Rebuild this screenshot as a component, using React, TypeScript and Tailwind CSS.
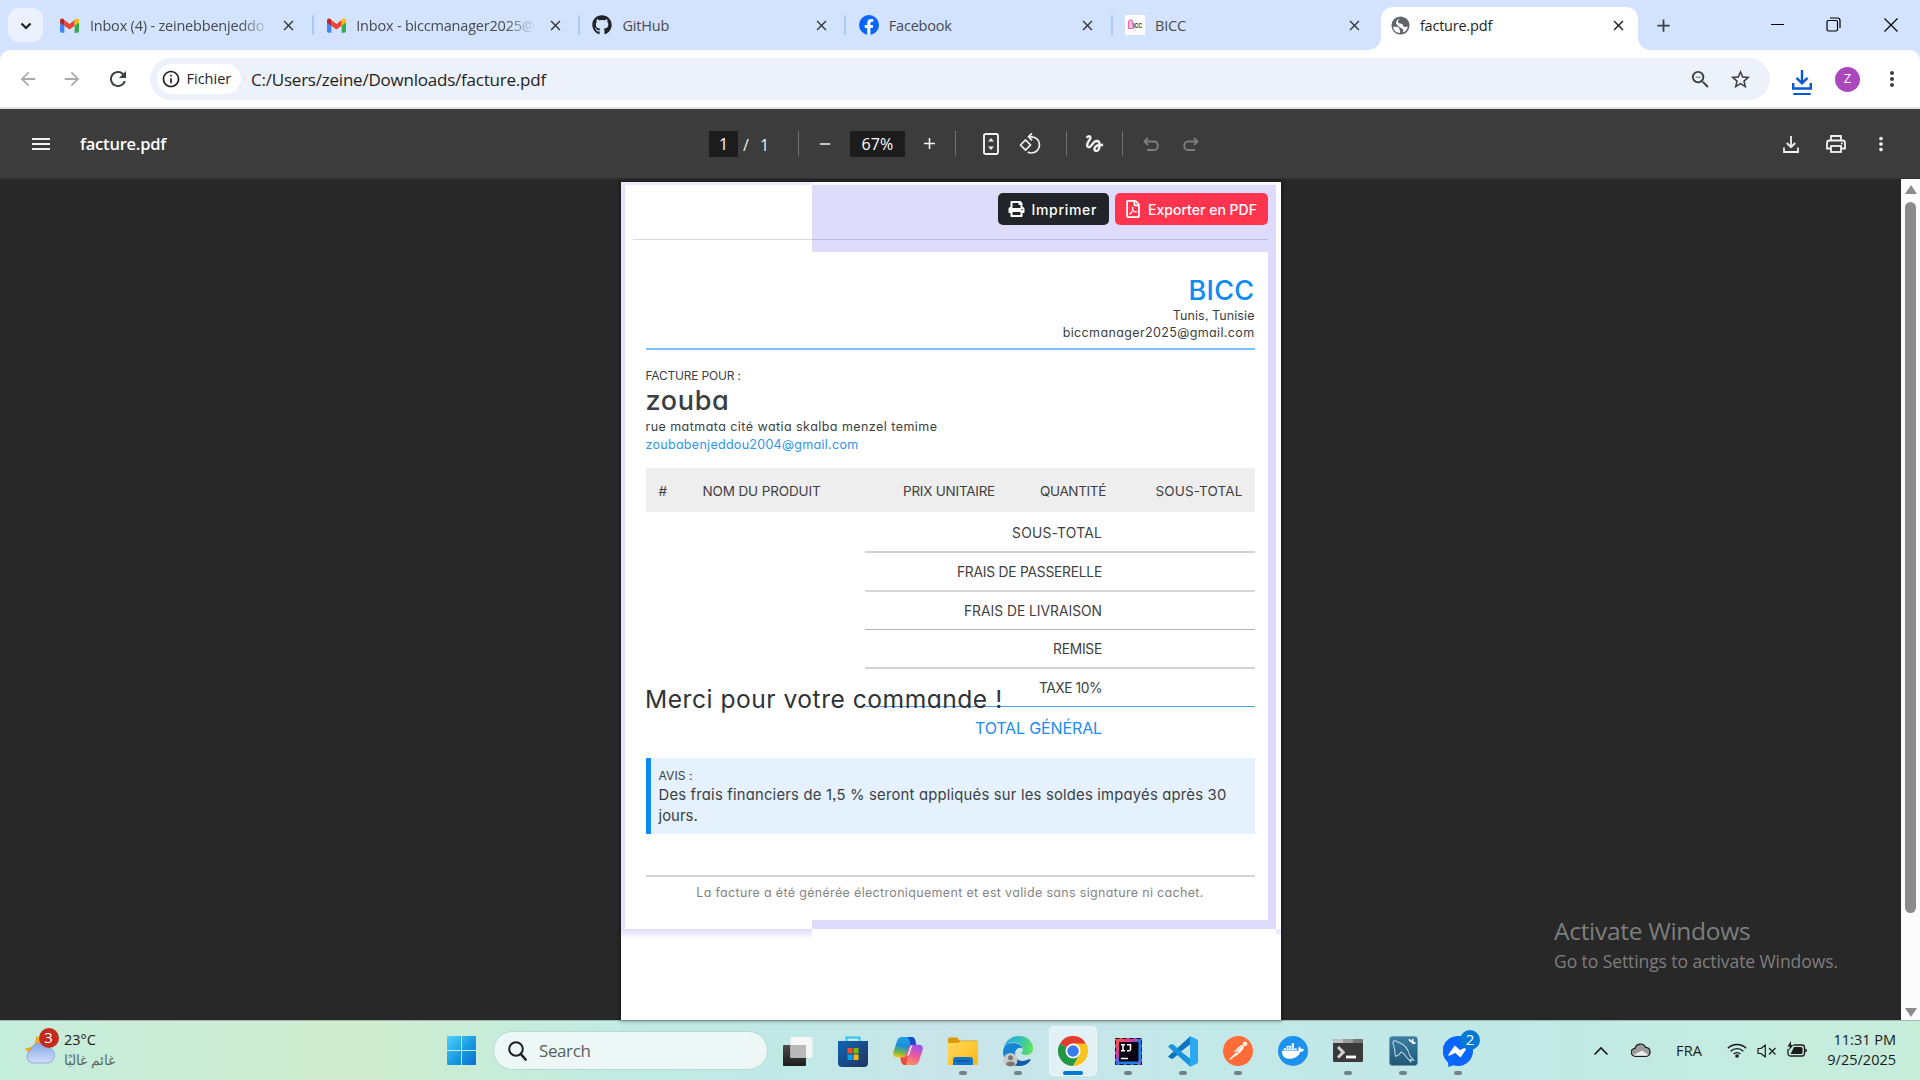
import type { ReactNode } from 'react';
import { FaGithub, FaPrint, FaRegFilePdf, FaDocker, FaFacebookF } from 'react-icons/fa';
import { SiPostman } from 'react-icons/si';
import {
  MdArrowBack,
  MdArrowForward,
  MdClose,
  MdGesture,
  MdMoreVert,
  MdOutlineInfo,
  MdRefresh,
  MdStarBorder,
  MdAdd,
  MdRemove,
  MdZoomOut,
} from 'react-icons/md';

/* ---------- small drawings ---------- */

const Gmail = () => (
  <svg viewBox="0 0 24 18" className="h-[15px] w-[19px]">
    <path d="M0 2.2V16a2 2 0 0 0 2 2h3.5V8Z" fill="#4285f4" />
    <path d="M24 2.2V16a2 2 0 0 1-2 2h-3.5V8Z" fill="#34a853" />
    <path d="M5.5 2 12 7l6.5-5v7.4L12 14.2 5.500 9.400Z" fill="#ea4335" />
    <path d="M0 2.600C0 .1 2.700-.8 4.400.9L5.500 2v7.400L0 5.300Z" fill="#c5221f" />
    <path d="M24 2.600c0-2.500-2.700-3.400-4.400-1.700L18.500 2v7.400L24 5.300Z" fill="#fbbc04" />
  </svg>
);

const Globe = () => (
  <svg viewBox="0 0 20 20" className="h-[19px] w-[19px]">
    <circle cx="10" cy="10" r="9.500" fill="#5f6368" />
    <path
      d="M2.200 11.200c2.600.2 4.200-.2 5.600.6 1.400.8.600 2 1.400 3 .7.900.5 2 .3 3C5.500 17.700 2.500 15 2.200 11.200ZM10 2.500c-2.500 1.500-3.500 3-2.200 4.700.8 1.100 2.500.6 3.800 1.300 1.300.700.7 2.200 2 2.800 1.200.5 2.600-.2 4-.3-.3 3.200-2.500 5.600-5.200 6.400.5-1.600.6-3-.4-4-1-.9-2.500-.7-3.300-1.800C7.500 9.700 5 9 5.300 6.800 5.600 4.600 7.800 2.700 10 2.500Z"
      fill="#fff"
    />
  </svg>
);

const BiccFavicon = () => (
  <span className="flex h-[20px] w-[20px] items-center justify-center bg-white">
    <svg viewBox="0 0 20 20" className="h-5 w-5">
      <path d="M3.500 13.500V7.500C3.500 4.500 7 4 7.500 7v1.500l1 1.500-.5 3.500Z" fill="#ffc2e2" stroke="#f562b0" strokeWidth="1.200" />
      <text x="8.200" y="12.500" fontSize="6.500" fontWeight="700" fontFamily="Liberation Sans, sans-serif" textLength="8.600" lengthAdjust="spacingAndGlyphs" fill="#333">ICC</text>
    </svg>
  </span>
);

const WindowsLogo = () => (
  <svg viewBox="0 0 29 29" className="h-[29px] w-[29px]">
    <defs>
      <linearGradient id="win" x1="0" y1="0" x2="1" y2="1">
        <stop offset="0" stopColor="#4fd2ff" />
        <stop offset="0.550" stopColor="#1899e0" />
        <stop offset="1" stopColor="#0a6fd2" />
      </linearGradient>
    </defs>
    <path d="M1 0h13v14H0V1q0-1 1-1ZM15 0h13q1 0 1 1v13H15ZM0 15h14v14H1q-1 0-1-1ZM15 15h14v13q0 1-1 1H15Z" fill="url(#win)" />
  </svg>
);

const TaskView = () => (
  <svg viewBox="0 0 30 30" className="h-[30px] w-[30px]">
    <defs>
      <linearGradient id="tvd" x1="0" y1="0" x2="0" y2="1">
        <stop offset="0" stopColor="#4b4b48" />
        <stop offset="1" stopColor="#1e1e1e" />
      </linearGradient>
    </defs>
    <rect x="0" y="9" width="23" height="21" rx="1" fill="url(#tvd)" />
    <rect x="7.500" y="1" width="22" height="21" rx="1" fill="#f6f6f6" />
    <rect x="7.500" y="9" width="15.500" height="13" fill="#b9b9b9" />
  </svg>
);

const Store = () => (
  <svg viewBox="0 0 30 31" className="h-[31px] w-[30px]">
    <defs>
      <linearGradient id="st" x1="0" y1="0" x2="1" y2="1">
        <stop offset="0" stopColor="#0f66b5" />
        <stop offset="1" stopColor="#21325f" />
      </linearGradient>
    </defs>
    <path d="M8.500 6V1.500h13V6" fill="none" stroke="#2cc3f5" strokeWidth="2" />
    <path d="M0 5h30v22q0 4-4 4H4q-4 0-4-4Z" fill="url(#st)" />
    <rect x="9.500" y="12" width="5" height="5.500" fill="#f25022" />
    <rect x="15.500" y="12" width="5" height="5.500" fill="#7fba00" />
    <rect x="9.500" y="18.500" width="5" height="5.500" fill="#00a4ef" />
    <rect x="15.500" y="18.500" width="5" height="5.500" fill="#ffb900" />
  </svg>
);

const Copilot = () => (
  <svg viewBox="0 0 30 30" className="h-[30px] w-[30px]">
    <defs>
      <linearGradient id="cpa" x1="0.500" y1="0" x2="0.300" y2="1">
        <stop offset="0" stopColor="#1ea0ea" />
        <stop offset="0.450" stopColor="#1c8fd8" />
        <stop offset="0.750" stopColor="#6cb54e" />
        <stop offset="1" stopColor="#f0c808" />
      </linearGradient>
      <linearGradient id="cpb" x1="0.700" y1="0" x2="0.300" y2="1">
        <stop offset="0" stopColor="#a04ff0" />
        <stop offset="0.500" stopColor="#ec5a9a" />
        <stop offset="1" stopColor="#fb9a52" />
      </linearGradient>
    </defs>
    <path d="M9 1h9c2.500 0 3.500 2 4 4l.8 3.500c-3-.5-4.800 1-5.800 4L15 18c-.8 2.500-2 3.300-4 3.300H4c-3 0-4.500-2-3.600-5.300L4 5C5 2 6.500 1 9 1Z" fill="url(#cpa)" />
    <path d="M17 1h2c2 0 3 2 3.500 4l.8 4c-4-.5-6 .5-7 4 1-4 2-8-2-12Z" fill="#1b48c7" />
    <path d="M21 29h-9c-2.500 0-3.500-2-4-4l-.8-3.500c3 .5 4.800-1 5.800-4l2-5.500c.8-2.500 2-3.300 4-3.300h7c3 0 4.500 2 3.600 5.300L26 25c-1 3-2.500 4-5 4Z" fill="url(#cpb)" />
    <path d="M13 29h-1c-2.500 0-3.500-2-4-4l-.8-3.500H11c2.500 0 3.500-1 4.300-3.500l-1 5c-.8 3-.8 4.500-1.300 6Z" fill="#ee4b3a" />
    <path d="M14 20l3-8.500c.4-1.400 1.300-2.300 2.500-2.500l-3 9c-.4 1.300-1.300 2-2.500 2Z" fill="#e2f0f4" />
  </svg>
);

const Explorer = () => (
  <svg viewBox="0 0 30 30" className="h-[30px] w-[30px]">
    <defs>
      <linearGradient id="ex" x1="0" y1="0" x2="1" y2="1">
        <stop offset="0" stopColor="#ffd95e" />
        <stop offset="1" stopColor="#fdb813" />
      </linearGradient>
    </defs>
    <path d="M0 3q0-1.500 1.500-1.500H9l3 3h18V8H0Z" fill="#dc9a0a" />
    <path d="M0 7h10l3-1.800h17V29H0Z" fill="url(#ex)" />
    <path d="M5 29v-5q0-3 3-3h14q3 0 3 3v5Z" fill="#1273c9" />
    <path d="M8.500 25h13" stroke="#0a4d93" strokeWidth="1.200" />
  </svg>
);

const Edge = () => (
  <svg viewBox="0 0 32 32" className="h-[32px] w-[32px]">
    <defs>
      <linearGradient id="eg" x1="0" y1="0.300" x2="1" y2="0.500">
        <stop offset="0" stopColor="#2aa7dd" />
        <stop offset="0.500" stopColor="#34c1b8" />
        <stop offset="1" stopColor="#5fe05a" />
      </linearGradient>
    </defs>
    <path d="M2 13C4 4 11 1 17 1c9 0 14 6.500 14 12 0 4.500-3 7-7 7-3 0-4.600-1-4.600-2 0-1 1.600-1.500 1.600-4 0-4-5-6.500-10-6.500-4 0-7 2-9 5.500Z" fill="url(#eg)" />
    <path d="M1 17C1 11 6 8 11 8c4.500 0 9.500 2 9.500 6-1.200-1.300-3.500-1.500-5-.5C12 16 12 23 17 27c2 2 5 2.500 5 2.500-2 1.500-4 1.500-6 1.500C8 31 1 25 1 17Z" fill="#1684d0" />
    <path d="M13 18c-1 5 4 9 9 7.800 3-.5 5-1.800 6-1.800.8 0 .7.800.3 1.400C26 29 21.500 31 17 31c-5 0-8-6-4-13Z" fill="#155ca6" />
    <circle cx="8.500" cy="25" r="7" fill="#c9cbcb" />
    <circle cx="8.500" cy="22.800" r="2.500" fill="#7c7672" />
    <path d="M4 29.500c0-4 9-4 9 0-2 2.200-7 2.200-9 0Z" fill="#7c7672" />
  </svg>
);

const Chrome = () => (
  <svg viewBox="0 0 30 30" className="h-[30px] w-[30px]">
    <path d="M15 15 2 7.500A15 15 0 0 1 28 7.500Z" fill="#e33b2e" />
    <path d="M15 15 2 7.500A15 15 0 0 0 15 30l6.500-11.300Z" fill="#229644" />
    <path d="M15 15l6.500 3.700L15 30A15 15 0 0 0 28 7.500H15Z" fill="#fcc31e" />
    <circle cx="15" cy="15" r="7.500" fill="#fff" />
    <circle cx="15" cy="15" r="5.800" fill="#3a7cec" />
  </svg>
);

const IntelliJ = () => (
  <svg viewBox="0 0 27 27" className="h-[27px] w-[27px]">
    <defs>
      <linearGradient id="ij" x1="0" y1="0" x2="1" y2="1">
        <stop offset="0" stopColor="#ff5a36" />
        <stop offset="0.350" stopColor="#d63aa5" />
        <stop offset="0.550" stopColor="#1a7df2" />
        <stop offset="0.850" stopColor="#227ff5" />
        <stop offset="1" stopColor="#c14fc0" />
      </linearGradient>
    </defs>
    <rect width="27" height="27" fill="url(#ij)" />
    <rect x="0.500" y="0.500" width="26" height="26" fill="none" stroke="#10101c" strokeWidth="1" strokeDasharray="4 3" />
    <rect x="4" y="4" width="19.500" height="19.500" fill="#0a0510" />
    <path d="M6 6.800h4M8 6.800v6M6 12.800h4M12 6.800h3.500v4.400q0 1.600-1.700 1.600H12" fill="none" stroke="#fff" strokeWidth="1.500" />
    <path d="M6 20.500h7" stroke="#fff" strokeWidth="1.500" />
  </svg>
);

const VsCode = () => (
  <svg viewBox="0 0 30 31" className="h-[31px] w-[30px]">
    <path d="M22 0 30 4v23l-8 4Z" fill="#2aa8f2" />
    <path d="M22 0v9L4.500 23 1.500 22 0 20.500 22 .5Z" fill="#0f74bd" />
    <path d="M22 31v-9L4.500 8 1.500 9 0 10.500 22 30.500Z" fill="#1a92de" />
    <path d="M22 8.500V22.500L13 15.500Z" fill="#c3e7e9" />
  </svg>
);

const Terminal = () => (
  <svg viewBox="0 0 30 24" className="h-[24px] w-[30px]">
    <rect width="30" height="23" rx="1.500" fill="#3a3a3a" />
    <path d="M0 1.500Q0 0 1.500 0H10v4H0Z" fill="#c4c4c4" />
    <path d="M10 0h10v4H10Z" fill="#9b9b9b" />
    <path d="M20 0h8.500Q30 0 30 1.500V4H20Z" fill="#757575" />
    <path d="M5 8l5.200 5.200L5 18.500" fill="none" stroke="#d2d2d2" strokeWidth="3" />
    <path d="M13 18h10" stroke="#fff" strokeWidth="2.800" />
  </svg>
);

const MySql = () => (
  <svg viewBox="0 0 30 31" className="h-[30px] w-[29px]">
    <defs>
      <linearGradient id="my" x1="0" y1="0" x2="0" y2="1">
        <stop offset="0" stopColor="#3b7fa3" />
        <stop offset="1" stopColor="#1f5675" />
      </linearGradient>
    </defs>
    <rect x="0.500" y="0.500" width="29" height="30" rx="3" fill="url(#my)" stroke="#6f9db5" />
    <path d="M7.500 21C5 20 7 15 5 10.500 4 8 3.500 5.500 5.500 5c2-.3 3.500 1.200 5.500 2 5 1.800 8.500 6.500 10 12 .7 2.300 2.500 3.500 4.500 6l-3.500-.8 1 3c-2.500-3.200-5-4.700-6-6.700-1.300-2.500-2.500-3.500-4.500-4-1 2-2.500 3.500-5 4.500Z" fill="none" stroke="#bcd7e4" strokeWidth="1.100" />
    <path d="M20.500 3.500l5 4.500M24.500 3v3.500l3 1" stroke="#fff" strokeWidth="1.700" fill="none" />
  </svg>
);

const Messenger = () => (
  <svg viewBox="0 0 30 31" className="h-[31px] w-[30px]">
    <path d="M15 0a15 15 0 1 1-4.500 29.300L5.500 31 5 26.500A15 15 0 0 1 15 0Z" fill="#0a66ff" />
    <path d="M6 19l6-8.500 5 4.500 6-3-5.700 8.500-5-4.500Z" fill="#fff" stroke="#fff" strokeWidth="1.500" strokeLinejoin="round" />
  </svg>
);

/* ---------- browser chrome ---------- */

const tabs: { icon: ReactNode; title: string; fade?: boolean }[] = [
  { icon: <Gmail />, title: 'Inbox (4) - zeinebbenjeddo', fade: true },
  { icon: <Gmail />, title: 'Inbox - biccmanager2025@', fade: true },
  { icon: <FaGithub className="h-5 w-5 text-[#1f2328]" />, title: 'GitHub' },
  {
    icon: (
      <span className="flex h-5 w-5 items-end justify-center overflow-hidden rounded-full bg-[#0866ff]">
        <FaFacebookF className="h-[16px] w-[16px] text-white" />
      </span>
    ),
    title: 'Facebook',
  },
  { icon: <BiccFavicon />, title: 'BICC' },
];

function TabStrip() {
  return (
    <div className="flex h-[50px] bg-[#d3e3fd] text-[14.5px] tracking-[-0.2px] text-[#474a4f]">
      <div className="mt-2 ml-2 flex h-[34px] w-[35px] items-center justify-center rounded-[11px] bg-[#ebf2fe]">
        <svg viewBox="0 0 12 8" className="mt-0.5 h-[8px] w-[12px]">
          <path d="M1.500 1.500 6 6l4.500-4.500" fill="none" stroke="#1f1f1f" strokeWidth="2.200" />
        </svg>
      </div>
      <div className="ml-[4.400px] flex">
        {tabs.map((t, i) => (
          <div key={i} className="flex w-[266.300px] items-center pl-[12.500px]">
            <div className="flex w-[20px] shrink-0 justify-center">{t.icon}</div>
            <div
              className={
                t.fade
                  ? 'relative top-px ml-[10px] w-[180px] whitespace-nowrap [mask-image:linear-gradient(to_right,black_150px,transparent_180px)]'
                  : 'relative top-px ml-[10px] w-[180px] whitespace-nowrap'
              }
            >
              {t.title}
            </div>
            <MdClose className="ml-[10.500px] h-[17px] w-[17px] text-[#35383c]" />
            <div className={i < 4 ? 'ml-auto h-5 w-0.5 rounded bg-[#a8c7fa]' : 'hidden'} />
          </div>
        ))}
      </div>
      <div className="flex items-end">
        <div className="-ml-[10px] h-3 w-3 bg-[radial-gradient(circle_at_0_0,transparent_11.500px,white_12px)]" />
        <div className="mt-[7px] flex h-[43px] w-[257px] self-start rounded-t-[12px] bg-white pl-[10px] text-[#1f1f1f]">
          <div className="flex h-[36px] items-center">
            <Globe />
            <span className="relative top-px ml-[10px] w-[180px]">facture.pdf</span>
            <MdClose className="ml-[10.500px] h-[17px] w-[17px] text-[#1f1f1f]" />
          </div>
        </div>
        <div className="h-3 w-3 bg-[radial-gradient(circle_at_100%_0,transparent_11.500px,white_12px)]" />
      </div>
      <div className="ml-[3.500px] flex items-center">
        <MdAdd className="h-[21px] w-[21px] text-[#3c4043]" />
      </div>
      <div className="mr-[22px] ml-auto flex items-center pb-px text-black">
        <div className="h-px w-[13px] bg-black" />
        <svg viewBox="0 0 15 15" className="ml-[42px] h-[15px] w-[15px]">
          <rect x="1" y="3.500" width="10.500" height="10.500" rx="1.500" fill="none" stroke="#000" strokeWidth="1.200" />
          <path d="M4 1h7.500q2.500 0 2.500 2.500V11" fill="none" stroke="#000" strokeWidth="1.200" />
        </svg>
        <svg viewBox="0 0 14 14" className="ml-[43px] h-[14px] w-[14px]">
          <path d="M.5.5l13 13M13.500.5l-13 13" stroke="#000" strokeWidth="1.200" />
        </svg>
      </div>
    </div>
  );
}

function AddressBar() {
  return (
    <div className="bg-[#d3e3fd]">
      <div className="flex h-[57px] items-center rounded-t-[10px] bg-white pt-px">
        <MdArrowBack className="ml-[16.500px] h-[22px] w-[22px] text-[#a9abae]" />
        <MdArrowForward className="ml-[22.500px] h-[22px] w-[22px] text-[#a9abae]" />
        <MdRefresh className="ml-[22.500px] h-[24px] w-[24px] text-[#3c4043]" />
        <div className="ml-[20.500px] flex h-[42px] w-[1620px] items-center rounded-full bg-[#ecf1fa] pl-[7px]">
          <div className="flex h-[30px] w-[84px] items-center rounded-full bg-white pl-[4px]">
            <MdOutlineInfo className="h-[20px] w-[20px] text-[#1f1f1f]" />
            <span className="ml-[5.500px] text-[14.500px] font-medium text-[#1f1f1f]">Fichier</span>
          </div>
          <span className="mt-px ml-[10px] text-[17px] tracking-[-0.220px] text-[#1f1f1f]">C:/Users/zeine/Downloads/facture.pdf</span>
          <MdZoomOut className="ml-auto h-[23px] w-[23px] text-[#3c4043]" />
          <MdStarBorder className="mr-[18px] ml-[17.500px] h-[23px] w-[23px] text-[#3c4043]" />
        </div>
        <div className="ml-[22px] flex flex-col items-center pt-[7px]">
          <svg viewBox="0 0 20 20" className="h-[20px] w-[20px]">
            <path d="M10 0v13M4.500 7.800 10 13.300l5.500-5.500M1.200 13v5.500h17.600V13" fill="none" stroke="#0b57d0" strokeWidth="2.400" />
          </svg>
          <div className="mt-[3px] h-[2.500px] w-[18px] rounded bg-[#0b57d0]" />
        </div>
        <div className="ml-[23px] flex h-[25px] w-[25px] items-center justify-center rounded-full bg-[#ab47bc] text-[13px] text-white">Z</div>
        <MdMoreVert className="ml-[20px] h-[24px] w-[24px] text-[#3c4043]" />
      </div>
    </div>
  );
}

const Divider = ({ className }: { className: string }) => <div className={`h-[25px] w-px bg-[#727272] ${className}`} />;

function PdfToolbar() {
  return (
    <div className="flex h-[70px] items-center border-b border-[#333] bg-[#3c3c3c] text-[16px] text-[#f1f1f1]">
      <div className="flex w-[709px] items-center">
        <svg viewBox="0 0 18 12" className="ml-[31.500px] mt-px h-[12px] w-[18px]">
          <path d="M0 1h18M0 6h18M0 11h18" stroke="#f1f1f1" strokeWidth="1.800" />
        </svg>
        <span className="relative top-px ml-[30.500px] text-[16.500px] font-semibold tracking-[-0.220px] text-white">facture.pdf</span>
      </div>
      <div className="flex h-[26px] w-[29px] items-center justify-center bg-[#1c1c1c] text-white">1</div>
      <span className="relative top-px ml-[5px] w-[17px]">/</span>
      <span className="relative top-px w-[32px]">1</span>
      <Divider className="ml-[6px]" />
      <MdRemove className="ml-[16.500px] h-[18px] w-[18px]" />
      <div className="ml-[16.500px] flex h-[26px] w-[55px] items-center justify-center bg-[#1c1c1c] tracking-[0.100px] text-white">67%</div>
      <MdAdd className="ml-[15px] h-[19px] w-[19px]" />
      <Divider className="ml-[16px]" />
      <svg viewBox="0 0 16 22" className="ml-[26.500px] h-[22px] w-[16px]">
        <rect x="1" y="1" width="14" height="20" rx="1.500" fill="none" stroke="#f1f1f1" strokeWidth="1.900" />
        <path d="M5 8.500 8 5l3 3.500ZM5 13.500 8 17l3-3.500Z" fill="#f1f1f1" />
      </svg>
      <svg viewBox="0 0 22 22" className="ml-[20.500px] h-[22px] w-[22px]">
        <path d="M1.500 12 6.500 7l5 5-5 5Z" fill="none" stroke="#f1f1f1" strokeWidth="1.700" />
        <path d="M9.500 3.800h3c4.500 0 8 3.500 8 8s-3.500 8.200-8 8.200c-1.500 0-2.700-.3-3.800-1" fill="none" stroke="#f1f1f1" strokeWidth="1.700" />
        <path d="M13 .3 9.500 3.800 13 7.300" fill="none" stroke="#f1f1f1" strokeWidth="1.700" />
      </svg>
      <Divider className="ml-[24.500px]" />
      <MdGesture className="ml-[16px] h-[23px] w-[23px]" />
      <Divider className="ml-[16.500px]" />
      <svg viewBox="0 0 16 15" className="ml-[19.500px] mt-[2px] h-[15px] w-[16px]">
        <path d="M5 1 1.500 4.500 5 8M1.500 4.500H11c5 0 5 8.500 0 8.500H4" fill="none" stroke="#7d7d7d" strokeWidth="1.800" />
      </svg>
      <svg viewBox="0 0 16 15" className="ml-[24px] mt-[2px] h-[15px] w-[16px]">
        <path d="M11 1l3.500 3.500L11 8M14.500 4.500H5c-5 0-5 8.500 0 8.500h7" fill="none" stroke="#7d7d7d" strokeWidth="1.800" />
      </svg>
      <div className="mr-[28.500px] ml-auto flex items-center pt-px">
        <svg viewBox="0 0 16 17" className="h-[17px] w-[16px]">
          <path d="M8 0v11M3.800 7 8 11.200 12.200 7M1 11.500V16h14v-4.500" fill="none" stroke="#f1f1f1" strokeWidth="1.800" />
        </svg>
        <svg viewBox="0 0 20 18" className="ml-[27px] h-[18px] w-[20px]">
          <path d="M5 5V1h10v4M5 13.500H1V8q0-2.500 2.500-2.500h13Q19 5.500 19 8v5.500h-4" fill="none" stroke="#f1f1f1" strokeWidth="1.800" />
          <rect x="5" y="11" width="10" height="6" fill="none" stroke="#f1f1f1" strokeWidth="1.800" />
          <circle cx="15.800" cy="8.500" r="1" fill="#f1f1f1" />
        </svg>
        <MdMoreVert className="ml-[24px] h-[22px] w-[22px]" />
      </div>
    </div>
  );
}

/* ---------- invoice ---------- */

const totals = [
  { label: 'SOUS-TOTAL', row: 'h-[41px] border-b-2 border-[#d2d2d2] pt-[4px] tracking-[0.240px]' },
  { label: 'FRAIS DE PASSERELLE', row: 'h-[39px] border-b-2 border-[#d6d6d6] pt-[2px] tracking-[-0.230px]' },
  { label: 'FRAIS DE LIVRAISON', row: 'h-[38px] border-b border-[#b4b4b4] pt-px' },
  { label: 'REMISE', row: 'h-[39px] border-b-2 border-[#d2d2d2] pt-[2px] tracking-[-0.250px]' },
  { label: 'TAXE 10%', row: 'h-[38px] border-b border-[#4da3e6] pt-[2px] tracking-[-0.460px]' },
  { label: 'TOTAL GÉNÉRAL', row: 'h-[43px] pb-[2px] text-[16px] tracking-[-0.130px] text-[#1a8cf0]' },
];

function Invoice() {
  return (
    <div className="w-[660px] overflow-hidden font-['Inter',sans-serif] text-[#3a3f44] [font-feature-settings:'cv11','ss03']">
      <div className="flex h-[3px]">
        <div className="w-[191px] bg-[#eceafc]" />
        <div className="grow bg-[#f9f8ff]" />
      </div>
      <div className="flex">
        <div className="w-[4px] bg-linear-to-r from-[#eceafc] to-[#dddbfa]" />
        <div className="w-[651px] bg-[#dedcfa]">
          <div className="flex h-[67px] bg-[linear-gradient(to_right,white_187px,transparent_187px)]">
            <div className="mx-[8px] flex h-[54.500px] w-[635px] items-start justify-end gap-[6px] border-b-[1.500px] border-black/15 pt-[8px] pr-[0.500px] text-[14px] font-medium text-white">
              <div className="flex h-[32px] w-[111px] items-center rounded-[5px] bg-[#212529] pl-[10px]">
                <FaPrint className="h-[16px] w-[17px]" />
                <span className="ml-[7px] tracking-[0.680px]">Imprimer</span>
              </div>
              <div className="flex h-[32px] w-[153px] items-center rounded-[5px] bg-[#ff3550] pl-[9px]">
                <FaRegFilePdf className="h-[18px] w-[18px]" />
                <span className="ml-[6.500px] tracking-[0.020px]">Exporter en PDF</span>
              </div>
            </div>
          </div>
          <div className="relative h-[668px] w-[642.500px] bg-white pt-[22px] pr-[13px] pl-[20.500px] text-[12.500px]">
            <div className="flex h-[34px] items-center justify-end text-[27px] font-medium tracking-[0.320px] text-[#0d8bf2]">BICC</div>
            <div className="flex h-[16px] items-center justify-end tracking-[0.080px]">Tunis, Tunisie</div>
            <div className="flex h-[18px] items-center justify-end tracking-[0.370px]">biccmanager2025@gmail.com</div>
            <div className="mt-[6px] h-[2px] bg-[#7cc3f6]" />
            <div className="mt-[18px] flex h-[16px] items-center text-[12px] tracking-[-0.200px]">FACTURE POUR :</div>
            <div className="flex h-[34px] items-center pt-px text-[27px] font-medium tracking-[0.680px]">zouba</div>
            <div className="flex h-[18px] items-center tracking-[0.450px]">rue matmata cité watia skalba menzel temime</div>
            <div className="flex h-[18px] items-center tracking-[0.290px] text-[#2e96ec]">zoubabenjeddou2004@gmail.com</div>
            <div className="mt-[14px] grid h-[44px] grid-cols-[44px_174px_144px_110px_137px] items-center bg-[#eeeeee] pt-[2px] text-[13.500px] text-[#3f3f3f]">
              <span className="pl-[13px]">#</span>
              <span className="pl-[13px] tracking-[-0.130px]">NOM DU PRODUIT</span>
              <span className="pr-[12.500px] text-right tracking-[-0.240px]">PRIX UNITAIRE</span>
              <span className="pr-[11.500px] text-right tracking-[-0.340px]">QUANTITÉ</span>
              <span className="pr-[12px] text-right tracking-[0.130px]">SOUS-TOTAL</span>
            </div>
            <div className="ml-auto w-[390px] text-[13.800px] text-[#3f3f3f]">
              {totals.map((t) => (
                <div key={t.label} className={`flex items-center justify-end pr-[152.500px] ${t.row}`}>
                  {t.label}
                </div>
              ))}
            </div>
            <div className="absolute top-[432px] left-[20px] flex h-[30px] items-center text-[24.600px] tracking-[0.510px] whitespace-nowrap text-[#2f3337]">
              Merci pour votre commande !
            </div>
            <div className="mt-[8px] h-[76px] border-l-[5px] border-[#0d8bf2] bg-[#e5f1fd] pt-[8px] pl-[8px] text-[14.800px] tracking-[0.210px] whitespace-nowrap">
              <div className="flex h-[19px] items-center text-[12px] tracking-[0.080px]">AVIS :</div>
              <div className="flex h-[20px] items-center">Des frais financiers de 1,5 % seront appliqués sur les soldes impayés après 30</div>
              <div className="flex h-[21px] items-center pt-px tracking-[0.070px]">jours.</div>
            </div>
            <div className="mt-[41px] flex h-[33px] items-center justify-center border-t-2 border-[#d4d4d4] pt-px text-[12.500px] tracking-[0.330px] whitespace-nowrap text-[#858585]">
              La facture a été générée électroniquement et est valide sans signature ni cachet.
            </div>
          </div>
          <div className="h-[9px] bg-[linear-gradient(to_right,white_187px,transparent_187px)]" />
        </div>
      </div>
      <div className="flex h-[10px]">
        <div className="w-[191px] bg-linear-to-b from-[#dddbfa] to-white" />
        <div className="ml-[464px] h-[5px] w-[5px] bg-[#eceafc]" />
      </div>
    </div>
  );
}

/* ---------- taskbar ---------- */

type Mark = 'none' | 'open' | 'active';

const apps: { icon: ReactNode; mark: Mark }[] = [
  { icon: <TaskView />, mark: 'none' },
  { icon: <Store />, mark: 'none' },
  { icon: <Copilot />, mark: 'none' },
  { icon: <Explorer />, mark: 'open' },
  { icon: <Edge />, mark: 'open' },
  { icon: <Chrome />, mark: 'active' },
  { icon: <IntelliJ />, mark: 'open' },
  { icon: <VsCode />, mark: 'open' },
  {
    icon: (
      <span className="flex h-[30px] w-[30px] items-center justify-center rounded-full bg-white">
        <SiPostman className="h-[30px] w-[30px] text-[#ff6c37]" />
      </span>
    ),
    mark: 'open',
  },
  {
    icon: (
      <span className="flex h-[30px] w-[30px] items-center justify-center rounded-full bg-[#1d91ee]">
        <FaDocker className="h-[22px] w-[22px] text-white" />
      </span>
    ),
    mark: 'none',
  },
  { icon: <Terminal />, mark: 'open' },
  { icon: <MySql />, mark: 'open' },
  {
    icon: (
      <span className="relative">
        <Messenger />
        <span className="absolute -top-[6px] left-[17px] flex h-[20px] w-[20px] items-center justify-center rounded-full bg-[#0078d4] text-[15px] text-white">2</span>
      </span>
    ),
    mark: 'open',
  },
];

const markClass: Record<Mark, string> = {
  none: 'h-[4px]',
  open: 'h-[4px] w-[8px] rounded-full bg-[#6f8385]',
  active: 'h-[4px] w-[20px] rounded-full bg-[#0078d4]',
};

function Taskbar() {
  return (
    <div className="flex h-[60px] border-t border-[#a3b8b5] bg-[linear-gradient(to_right,#c5eddd_0px,#cdecd3_250px,#d0ecce_360px,#c6ecd9_500px,#c0eae4_650px,#c0e9e6_780px,#c9e4e9_950px,#c2e8e8_1200px,#c0e8e6_1500px,#c4ecdf_1750px,#c6ecda_1920px)] text-[14.500px] text-[#1b1b1b]">
      <div className="flex w-[433px] items-start pt-[9px] pl-[24px]">
        <div className="relative">
          <svg viewBox="0 0 32 36" className="h-[36px] w-[32px]">
            <path d="M1 18C7 19 13 14 12 6c9 4 7 16-1 18-4 0-8-2-10-6Z" fill="#f5a623" />
            <defs>
              <linearGradient id="cl" x1="0" y1="0" x2="0" y2="1">
                <stop offset="0" stopColor="#84a9ea" />
                <stop offset="1" stopColor="#d3def8" />
              </linearGradient>
            </defs>
            <path d="M8 33a7 7 0 0 1-1-13c1-8 14-9 16-2 10-1 10 15 0 15Z" fill="url(#cl)" stroke="#7f9fdd" strokeWidth="0.800" />
          </svg>
          <span className="absolute -top-[2.500px] left-[14.500px] flex h-[20px] w-[20px] items-center justify-center rounded-full bg-[#c42b1c] text-[15px] text-white">3</span>
        </div>
        <div className="ml-[8px] leading-[20px]">
          <div>23°C</div>
          <div className="text-[13.800px] text-[#5a6a63]" dir="rtl">غائم غالبًا</div>
        </div>
      </div>
      <div className="flex w-[60px] items-center pl-[14px]">
        <WindowsLogo />
      </div>
      <div className="mt-[10px] flex h-[39px] w-[275px] items-center rounded-full border border-[#b4dad3] bg-[#edf8f6] pl-[14px]">
        <svg viewBox="0 0 19 20" className="h-[20px] w-[19px]">
          <circle cx="8" cy="8" r="6.800" fill="none" stroke="#1f1f1f" strokeWidth="2" />
          <path d="M12.800 13l4.800 5.500" stroke="#1f1f1f" strokeWidth="2.600" strokeLinecap="round" />
        </svg>
        <span className="ml-[12px] text-[17px] tracking-[-0.400px] text-[#56605e]">Search</span>
      </div>
      <div className="ml-[2.500px] flex">
        {apps.map((a, i) => (
          <div key={i} className="flex w-[55px] flex-col items-center pt-[5px]">
            <div
              className={
                a.mark === 'active'
                  ? 'flex h-[50px] w-[48px] items-center justify-center rounded-[5px] border border-white/40 bg-[#e2f1f5]'
                  : 'flex h-[50px] w-[48px] items-center justify-center'
              }
            >
              {a.icon}
            </div>
            <div className={`-mt-[5px] ${markClass[a.mark]}`} />
          </div>
        ))}
      </div>
      <div className="mr-[24px] ml-auto flex items-center">
        <svg viewBox="0 0 14 9" className="h-[9px] w-[14px]">
          <path d="M1 8l6-6 6 6" fill="none" stroke="#1b1b1b" strokeWidth="1.700" strokeLinecap="round" />
        </svg>
        <svg viewBox="0 0 20 14" className="ml-[23px] -mt-px h-[14px] w-[20px]">
          <path d="M4.500 13.300a4 4 0 0 1-.5-8C5 .5 12.500-.8 14.500 4.300c6 .2 6 9 .5 9Z" fill="#9c9c9c" stroke="#1b1b1b" strokeWidth="1.200" />
          <path d="M2.500 12 11 7.500l6.500 4.500q-1 .7-2.500.7H5q-1.500 0-2.500-.7Z" fill="#ececec" />
        </svg>
        <span className="ml-[25px] tracking-[0.100px]">FRA</span>
        <svg viewBox="0 0 20 15" className="ml-[25px] h-[15px] w-[20px]">
          <path d="M.8 5.300a13 13 0 0 1 18.400 0M3.700 8.200a9 9 0 0 1 12.600 0M6.600 11a5 5 0 0 1 6.800 0" fill="none" stroke="#1b1b1b" strokeWidth="1.400" />
          <circle cx="10" cy="13" r="1.800" fill="#1b1b1b" />
        </svg>
        <svg viewBox="0 0 19 14" className="ml-[10px] h-[14px] w-[19px]">
          <path d="M1 4.500h3L8.300 1v12L4 9.500H1Z" fill="none" stroke="#1b1b1b" strokeWidth="1.200" strokeLinejoin="round" />
          <path d="M12 4l6.500 6.500M18.500 4 12 10.500" stroke="#1b1b1b" strokeWidth="1.200" />
        </svg>
        <svg viewBox="0 0 20 17" className="ml-[11px] -mt-[3px] h-[17px] w-[20px]">
          <path d="M6.500 4H15q2.500 0 2.500 2.500v6Q17.500 15 15 15H3.500Q1 15 1 12.500V8" fill="none" stroke="#1b1b1b" strokeWidth="1.300" />
          <path d="M7 6h7q1.500 0 1.500 1.500v4Q15.500 13 14 13H3.500Z" fill="#1b1b1b" />
          <path d="M18.300 7.500q1.700.3 1.700 2t-1.700 2Z" fill="#1b1b1b" />
          <path d="M4 0 .5 5.500h2.300L1.800 9.500 6.500 4H4Z" fill="#1b1b1b" />
        </svg>
        <div className="ml-[19px] w-[70px] pb-px text-right leading-[20.500px]">
          <div>11:31 PM</div>
          <div>9/25/2025</div>
        </div>
      </div>
    </div>
  );
}

/* ---------- page ---------- */

export default function App() {
  return (
    <div className="flex h-[1080px] w-[1920px] flex-col overflow-hidden font-['Open_Sans','Noto_Sans',sans-serif]">
      <TabStrip />
      <AddressBar />
      <div className="h-[2px] bg-[#dfe3e3]" />
      <PdfToolbar />
      <div className="relative flex h-[841px] bg-[#282828]">
        <div className="mt-[3px] ml-[621px] h-[838px] bg-white shadow-[0_0_4px_1px_rgba(0,0,0,0.4)]">
          <Invoice />
        </div>
        <div className="ml-auto flex w-[19px] flex-col items-center bg-[#fcfcfc] pt-[6px]">
          <div className="h-0 w-0 border-x-[6px] border-b-[9px] border-x-transparent border-b-[#8b8b8b]" />
          <div className="mt-[8px] h-[711px] w-[11px] rounded-full bg-[#8b8b8b]" />
          <div className="mt-auto mb-[3px] h-0 w-0 border-x-[6px] border-t-[9px] border-x-transparent border-t-[#8b8b8b]" />
        </div>
        <div className="absolute top-[736px] left-[1554px] whitespace-nowrap text-[#7e7e7e]">
          <div className="text-[24.500px] leading-[32px] tracking-[-0.300px]">Activate Windows</div>
          <div className="text-[17.500px] leading-[28px] tracking-[-0.080px]">Go to Settings to activate Windows.</div>
        </div>
      </div>
      <Taskbar />
    </div>
  );
}
